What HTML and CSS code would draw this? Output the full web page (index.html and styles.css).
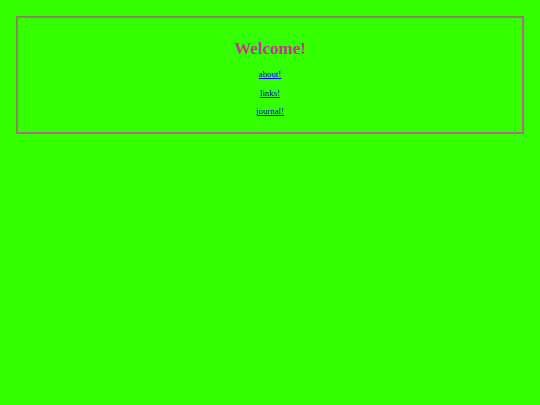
FILE: index.html
```html
<!DOCTYPE html>
<html>
<head>
<meta charset="utf-8">
<title>Welcome</title>
<link rel="stylesheet" href="styles.css">
</head>
<body>
<div class="box">
  <h1 class="title">Welcome!</h1>
  <p class="item"><a href="#">about!</a></p>
  <p class="item"><a href="#">links!</a></p>
  <p class="item"><a href="#">journal!</a></p>
</div>
</body>
</html>
```
FILE: styles.css
```css
html, body {
  margin: 0;
  padding: 0;
  background: #33ff00;
}
body {
  padding: 16px;
  font-family: "Liberation Serif", "Times New Roman", serif;
}
.box {
  border: 1px solid #8c8060;
  box-shadow: inset 0 0 0 1px #b86a90;
  text-align: center;
  padding: 22px 0 12px;
}
.title {
  margin: 0 0 6px;
  font-size: 17px;
  line-height: 20px;
  font-weight: bold;
  color: #cc3399;
}
.item {
  margin: 0;
  font-size: 8.8px;
  line-height: 18.5px;
}
.item a {
  color: #0000ee;
}
```
